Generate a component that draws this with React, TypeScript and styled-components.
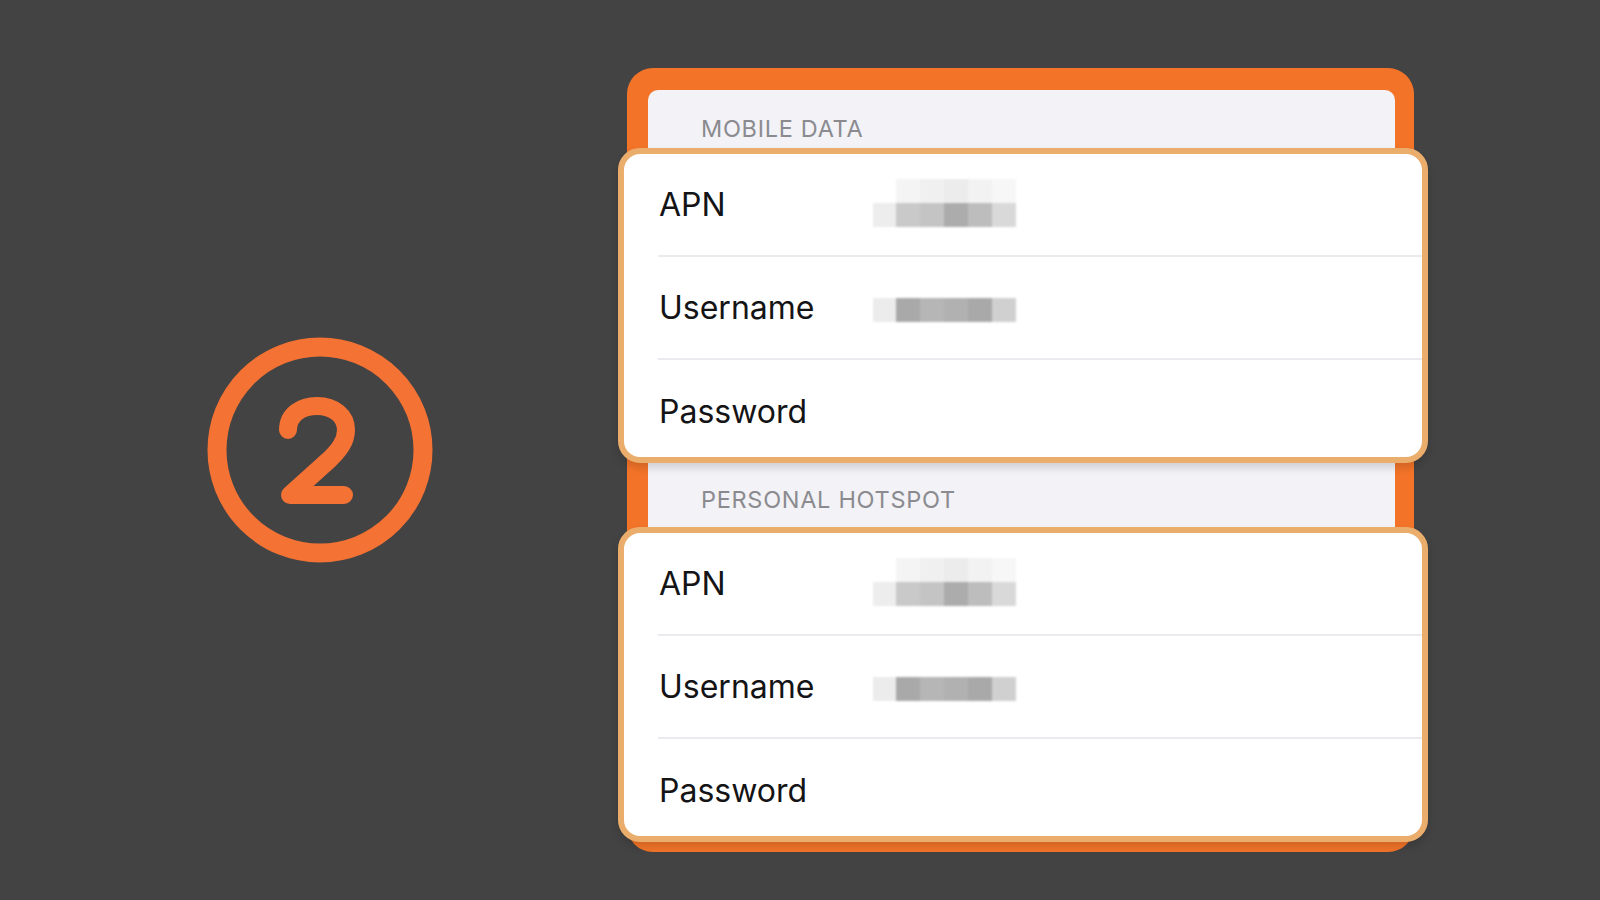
import React, { FC } from 'react';
import styled, { createGlobalStyle } from 'styled-components';

type Field = { label: string; value?: string[][] };

const APN_CELLS = [
  ['#ffffff', '#f4f4f4', '#f0f0f0', '#ececec', '#f2f2f2', '#f7f7f7'],
  ['#ededed', '#c9c9c9', '#c4c4c4', '#acacac', '#bdbdbd', '#d9d9d9'],
];
const USER_CELLS = [['#ececec', '#a9a9a9', '#b6b6b6', '#b1b1b1', '#a9a9a9', '#d0d0d0']];

const sections: { title: string; titleOffset: number; fields: Field[] }[] = [
  {
    title: 'MOBILE DATA',
    titleOffset: 19,
    fields: [{ label: 'APN', value: APN_CELLS }, { label: 'Username', value: USER_CELLS }, { label: 'Password' }],
  },
  {
    title: 'PERSONAL HOTSPOT',
    titleOffset: 10,
    fields: [{ label: 'APN', value: APN_CELLS }, { label: 'Username', value: USER_CELLS }, { label: 'Password' }],
  },
];

const StepBadge: FC = () => (
  <Badge viewBox="0 0 226 226" width={226} height={226}>
    <circle cx="113" cy="113" r="103" fill="none" stroke="#f47234" strokeWidth="19" />
    <path
      d="M81 93 C81 77 95 69 110 69 C127 69 139 79 139 93 C139 105 131 114 123 122 L83 158 L137 158"
      fill="none"
      stroke="#f47234"
      strokeWidth="18"
      strokeLinecap="round"
      strokeLinejoin="round"
    />
  </Badge>
);

const Redacted: FC<{ rows: string[][] }> = ({ rows }) => (
  <Blur $shift={rows.length > 1 ? -3 : 4}>
    {rows.map((row, r) => (
      <BlurRow key={r}>
        {row.map((tone, c) => (
          <BlurCell key={c} style={{ background: tone }} />
        ))}
      </BlurRow>
    ))}
  </Blur>
);

const App: FC = () => {
  return (
    <>
      <GlobalStyle />
      <Stage>
        <StepBadge />
        <Frame>
          <Panel>
            {sections.map((section) => (
              <React.Fragment key={section.title}>
                <SectionTitle $offset={section.titleOffset}>{section.title}</SectionTitle>
                <Card>
                  {section.fields.map((field, i) => (
                    <Row key={field.label} $last={i === section.fields.length - 1}>
                      <Label>{field.label}</Label>
                      {field.value && <Redacted rows={field.value} />}
                    </Row>
                  ))}
                </Card>
              </React.Fragment>
            ))}
          </Panel>
        </Frame>
      </Stage>
    </>
  );
};
export default App;

const GlobalStyle = createGlobalStyle`
  html, body {
    margin: 0;
    padding: 0;
    background: #434343;
  }
  body {
    font-family: Inter, "Liberation Sans", sans-serif;
  }
`;

const Stage = styled.div`
  display: flex;
  align-items: flex-start;
  width: 1600px;
  height: 900px;
  box-sizing: border-box;
  padding: 68px 0 0 207px;
  background: #434343;
  overflow: hidden;
`;

const Badge = styled.svg`
  flex: none;
  margin-top: 269px;
  margin-right: 194px;
`;

const Frame = styled.div`
  width: 787px;
  box-sizing: border-box;
  padding: 22px 19px 10px 21px;
  background: #f37429;
  border-radius: 26px;
`;

const Panel = styled.div`
  display: flex;
  flex-direction: column;
  background: #f2f2f7;
  border-radius: 10px 10px 0 0;
`;

const SectionTitle = styled.div<{ $offset: number }>`
  display: flex;
  align-items: center;
  height: ${(p) => (p.$offset === 19 ? 58 : 64)}px;
  box-sizing: border-box;
  padding: ${(p) => p.$offset}px 0 0 53px;
  font-size: 23.5px;
  line-height: 1;
  letter-spacing: 0.7px;
  color: #8b8b8f;
`;

const Card = styled.div`
  position: relative;
  margin: 0 -33px 0 -30px;
  height: 315px;
  box-sizing: border-box;
  display: flex;
  flex-direction: column;
  overflow: hidden;
  background: #fff;
  border: 6px solid #ebad6c;
  border-radius: 22px;
  box-shadow: 0 5px 8px rgba(0, 0, 0, 0.14);
`;

const Row = styled.div<{ $last: boolean }>`
  display: flex;
  align-items: center;
  flex: none;
  height: 103px;
  box-sizing: border-box;
  margin-left: 34px;
  border-bottom: ${(p) => (p.$last ? 'none' : '2px solid #ebebef')};
`;

const Label = styled.div`
  width: 214px;
  padding-left: 1px;
  font-size: 32px;
  font-weight: 400;
  line-height: 1;
  color: #141416;
`;

const Blur = styled.div<{ $shift: number }>`
  display: flex;
  flex-direction: column;
  margin-top: ${(p) => p.$shift}px;
  filter: blur(1.2px);
`;

const BlurRow = styled.div`
  display: flex;
  height: 24px;
`;

const BlurCell = styled.div`
  width: 24px;
  &:first-child {
    width: 23px;
  }
`;
